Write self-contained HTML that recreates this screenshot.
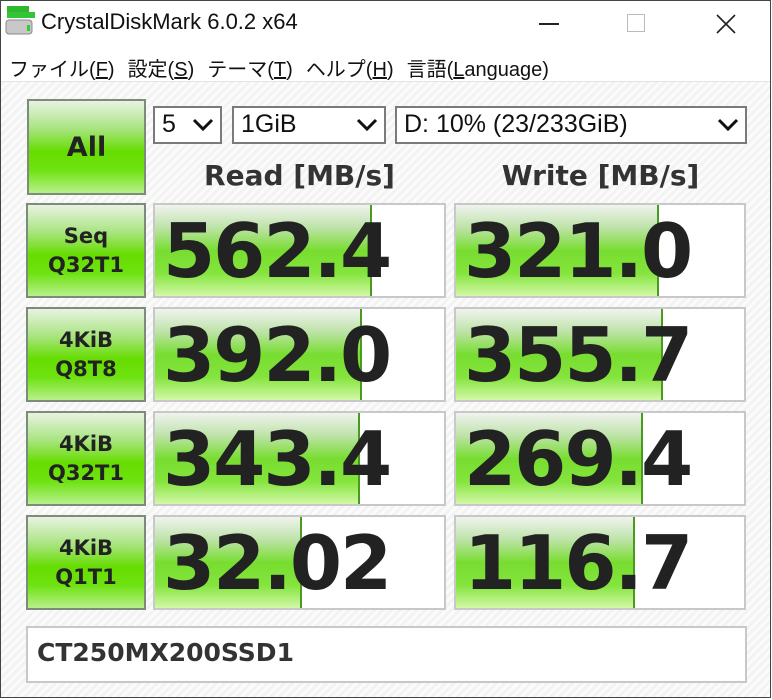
<!DOCTYPE html>
<html><head><meta charset="utf-8"><style>
*{margin:0;padding:0;box-sizing:border-box}
body{width:772px;height:700px;overflow:hidden;background:#fff;font-family:"Liberation Sans","Noto Sans CJK JP",sans-serif;position:relative}
.frame{position:absolute;left:0;top:0;width:771px;height:698px;border:1px solid #444;pointer-events:none;z-index:5}
.content{position:absolute;left:1px;top:81px;width:769px;height:616px;border-top:1px solid #e4e4e4;
background:repeating-linear-gradient(135deg,#f3f3f3 0 3px,#fbfbfb 3px 6px)}
.a{position:absolute}
.title{left:41px;top:9px;font-size:22px;color:#111}
.menu{left:9px;top:53px;font-size:20px;color:#111;white-space:nowrap}
.menu span{margin-right:13px}
.btn{border:2px solid #7d8c7a;background:linear-gradient(#e8f3e2 0%,#a8e480 30%,#66dd00 55%,#6ee210 75%,#b8f08a 100%);font-family:"DejaVu Sans",sans-serif;font-weight:bold;color:#222;display:flex;align-items:center;justify-content:center;text-align:center;font-size:21px;line-height:29px}
.sel{border:2px solid #7a7a7a;background:#fff;font-size:25px;color:#111;padding-left:7px;line-height:33px}
.sel .chev{position:absolute;right:6px;top:10px;width:22px;height:14px}
.hdr{font-family:"DejaVu Sans",sans-serif;font-weight:bold;font-size:28px;color:#333;text-align:center;width:291px;top:159px}
.tile{border:2px solid #c8c8c8;background:#fff;overflow:hidden}
.bar{position:absolute;left:0;top:0;bottom:0;background:linear-gradient(#f0f3ef 0%,#bde3a8 25%,#78dd30 50%,#84e43c 75%,#d2f8a8 100%);border-right:2px solid #4a9a20}
.num{position:absolute;left:8px;top:6px;font-family:"DejaVu Sans",sans-serif;font-weight:bold;font-size:75px;letter-spacing:-2px;color:#222;line-height:80px}
</style></head><body>
<div class="frame"></div>
<svg class="a" style="left:5px;top:4px" width="30" height="34" viewBox="0 0 30 34">
<rect x="2" y="2" width="22" height="8" fill="#2db82d"/><rect x="2" y="8" width="30" height="6" fill="#35c435"/>
<rect x="1" y="16" width="26" height="14" rx="3" fill="#c8c8c8" stroke="#888"/><rect x="22" y="21" width="3" height="6" fill="#3c3"/>
</svg>
<div class="a title">CrystalDiskMark 6.0.2 x64</div>
<div class="a" style="left:539px;top:23px;width:20px;height:1.5px;background:#222"></div>
<div class="a" style="left:627px;top:14px;width:18px;height:18px;border:1px solid #bbb"></div>
<svg class="a" style="left:715px;top:13px" width="22" height="22"><path d="M2 2L20 20M20 2L2 20" stroke="#222" stroke-width="1.6"/></svg>
<div class="a menu"><span>ファイル(<u>F</u>)</span><span>設定(<u>S</u>)</span><span>テーマ(<u>T</u>)</span><span>ヘルプ(<u>H</u>)</span><span>言語(<u>L</u>anguage)</span></div>
<div class="content"></div>

<div class="a btn" style="left:27px;top:99px;width:119px;height:96px;font-size:27px">All</div>
<div class="a sel" style="left:153px;top:106px;width:69px;height:38px">5<svg class="chev" viewBox="0 0 22 14"><path d="M2 2L11 11L20 2" fill="none" stroke="#111" stroke-width="3"/></svg></div>
<div class="a sel" style="left:232px;top:106px;width:154px;height:38px">1GiB<svg class="chev" viewBox="0 0 22 14"><path d="M2 2L11 11L20 2" fill="none" stroke="#111" stroke-width="3"/></svg></div>
<div class="a sel" style="left:395px;top:106px;width:352px;height:38px">D: 10% (23/233GiB)<svg class="chev" viewBox="0 0 22 14"><path d="M2 2L11 11L20 2" fill="none" stroke="#111" stroke-width="3"/></svg></div>

<div class="a hdr" style="left:154px">Read [MB/s]</div>
<div class="a hdr" style="left:455px">Write [MB/s]</div>

<div class="a btn" style="left:26px;top:203px;width:120px;height:95px">Seq<br>Q32T1</div>
<div class="a tile" style="left:153px;top:203px;width:293px;height:95px"><div class="bar" style="width:217px"></div><div class="num">562.4</div></div>
<div class="a tile" style="left:454px;top:203px;width:292px;height:95px"><div class="bar" style="width:203px"></div><div class="num">321.0</div></div>

<div class="a btn" style="left:26px;top:307px;width:120px;height:95px">4KiB<br>Q8T8</div>
<div class="a tile" style="left:153px;top:307px;width:293px;height:95px"><div class="bar" style="width:207px"></div><div class="num">392.0</div></div>
<div class="a tile" style="left:454px;top:307px;width:292px;height:95px"><div class="bar" style="width:207px"></div><div class="num">355.7</div></div>

<div class="a btn" style="left:26px;top:411px;width:120px;height:95px">4KiB<br>Q32T1</div>
<div class="a tile" style="left:153px;top:411px;width:293px;height:95px"><div class="bar" style="width:205px"></div><div class="num">343.4</div></div>
<div class="a tile" style="left:454px;top:411px;width:292px;height:95px"><div class="bar" style="width:187px"></div><div class="num">269.4</div></div>

<div class="a btn" style="left:26px;top:515px;width:120px;height:95px">4KiB<br>Q1T1</div>
<div class="a tile" style="left:153px;top:515px;width:293px;height:95px"><div class="bar" style="width:147px"></div><div class="num">32.02</div></div>
<div class="a tile" style="left:454px;top:515px;width:292px;height:95px"><div class="bar" style="width:179px"></div><div class="num">116.7</div></div>

<div class="a tile" style="left:26px;top:626px;width:721px;height:57px;font-family:'DejaVu Sans',sans-serif;font-weight:bold;font-size:25px;color:#333;padding:10px 0 0 9px">CT250MX200SSD1</div>
</body></html>
